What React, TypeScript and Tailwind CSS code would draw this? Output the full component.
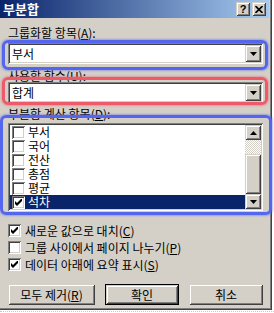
import type { ReactNode } from "react";

const sunken =
  "shadow-[inset_1px_1px_0_#808080,inset_-1px_-1px_0_#ffffff,inset_2px_2px_0_#404040,inset_-2px_-2px_0_#d4d0c8]";
const raised =
  "shadow-[inset_1px_1px_0_#d4d0c8,inset_-1px_-1px_0_#404040,inset_2px_2px_0_#ffffff,inset_-2px_-2px_0_#808080]";

function Arrow({ up = false }: { up?: boolean }) {
  return (
    <svg width="7" height="4" viewBox="0 0 7 4">
      <polygon points={up ? "0,4 7,4 3.5,0" : "0,0 7,0 3.5,4"} fill="#000" />
    </svg>
  );
}

function CheckBox({ checked }: { checked: boolean }) {
  return (
    <span
      className={`flex h-[13px] w-[13px] shrink-0 items-center justify-center bg-white ${sunken}`}
    >
      {checked ? (
        <svg width="7" height="7" viewBox="0 0 7 7">
          <polygon points="0,2 2,4 7,-1 7,2 2,7 0,5" fill="#000" />
        </svg>
      ) : null}
    </span>
  );
}

function Label({ children, className = "" }: { children: ReactNode; className?: string }) {
  return <div className={`h-[12px] text-[12px] leading-[12px] text-black ${className}`}>{children}</div>;
}

function Combo({ value, className = "" }: { value: string; className?: string }) {
  return (
    <div className={`flex h-[21px] items-center bg-white pl-[4px] pr-[2px] ${sunken} ${className}`}>
      <span className="flex-1 text-[12px] leading-[14px]">{value}</span>
      <span className={`flex h-[17px] w-[16px] items-center justify-center bg-[#d4d0c8] ${raised}`}>
        <Arrow />
      </span>
    </div>
  );
}

const fields = ["부서", "국어", "전산", "총점", "평균", "석차"];

export default function App() {
  return (
    <div className="relative h-[313px] w-[274px] overflow-hidden bg-white font-['Noto_Sans_CJK_KR','Noto_Sans_CJK_SC',sans-serif]">
      <div className="flex h-[310px] w-[272px] flex-col bg-[#d4d0c8] shadow-[inset_-1px_-1px_0_#404040,inset_-2px_-2px_0_#808080]">
        {/* title bar */}
        <div className="flex h-[18px] w-[269px] items-center bg-[linear-gradient(90deg,#0a246a_0%,#a6caf0_100%)] pl-[3px] pr-[3px]">
          <span className="flex-1 text-[13px] font-bold leading-[16px] text-white">부분합</span>
          <div className="flex gap-[2px]">
            <span className={`flex h-[14px] w-[14px] items-center justify-center bg-[#d4d0c8] ${raised}`}>
              <span className="font-['Liberation_Sans',sans-serif] text-[11px] font-bold leading-[11px]">?</span>
            </span>
            <span className={`flex h-[14px] w-[14px] items-center justify-center bg-[#d4d0c8] ${raised}`}>
              <svg width="8" height="7" viewBox="0 0 8 7">
                <path d="M0.5 0 L7.5 7 M7.5 0 L0.5 7" stroke="#000" strokeWidth="1.6" />
              </svg>
            </span>
          </div>
        </div>

        <div className="flex w-[271px] flex-col pl-[8px] pr-[8px]">
          <Label className="mt-[9px]">
            그룹화할 항목(<span className="underline">A</span>):
          </Label>
          <Combo value="부서" className="mt-[4px]" />

          <Label className="mt-[6px] h-[10px] leading-[10px]">
            사용할 함수(<span className="underline">U</span>):
          </Label>
          <Combo value="합계" />

          <Label className="mt-[5px]">
            부분합 계산 항목(<span className="underline">D</span>):
          </Label>
          <div className={`mt-[3px] flex h-[88px] bg-white p-[2px] ${sunken}`}>
            <div className="flex flex-1 flex-col">
              {fields.map((f, i) => {
                const selected = i === fields.length - 1;
                return (
                  <div
                    key={f}
                    className={`flex h-[14px] items-center gap-[3px] pl-[2px] text-[12px] leading-[14px] ${
                      selected ? "bg-[#0a246a] text-white" : "text-black"
                    }`}
                  >
                    <CheckBox checked={selected} />
                    <span>{f}</span>
                  </div>
                );
              })}
            </div>
            <div className="flex w-[16px] flex-col">
              <span className={`flex h-[15px] items-center justify-center bg-[#d4d0c8] ${raised}`}>
                <Arrow up />
              </span>
              <span className="h-[14px] bg-[repeating-conic-gradient(#d4d0c8_0_25%,#ffffff_0_50%)] bg-[length:2px_2px]" />
              <span className={`h-[40px] bg-[#d4d0c8] ${raised}`} />
              <span className={`flex h-[15px] items-center justify-center bg-[#d4d0c8] ${raised}`}>
                <Arrow />
              </span>
            </div>
          </div>

          <div className="mt-[11px] flex flex-col text-[12px] leading-[17px]">
            {[
              { c: true, t: "새로운 값으로 대치(", k: "C" },
              { c: false, t: "그룹 사이에서 페이지 나누기(", k: "P" },
              { c: true, t: "데이터 아래에 요약 표시(", k: "S" },
            ].map((r) => (
              <div key={r.k} className="flex h-[17px] items-center gap-[4px]">
                <CheckBox checked={r.c} />
                <span>
                  {r.t}
                  <span className="underline">{r.k}</span>)
                </span>
              </div>
            ))}
          </div>

          <div className="mt-[11px] flex gap-[10px] text-[12px] leading-[14px]">
            <button type="button" className={`flex h-[21px] w-[87px] items-center justify-center bg-[#d4d0c8] ${raised}`}>
              모두 제거(<span className="underline">R</span>)
            </button>
            <button type="button" className="h-[21px] w-[74px] border border-black bg-[#d4d0c8]">
              <span className={`flex h-full w-full items-center justify-center ${raised}`}>확인</span>
            </button>
            <button type="button" className={`flex h-[21px] w-[74px] items-center justify-center bg-[#d4d0c8] ${raised}`}>
              취소
            </button>
          </div>
        </div>
      </div>
      <div className="mt-[1px] w-full border-b border-dotted border-[#c8c8c8]" />

      {/* annotation rings */}
      <div className="pointer-events-none absolute left-[2px] top-[40px] h-[30px] w-[266px] rounded-[6px] border-[3px] border-[#5566ee] shadow-[0_0_2px_1px_rgba(85,102,238,0.45)]" />
      <div className="pointer-events-none absolute left-[2px] top-[77px] h-[28px] w-[266px] rounded-[6px] border-[3px] border-[#ee5a6a] shadow-[0_0_2px_1px_rgba(238,90,106,0.45)]" />
      <div className="pointer-events-none absolute left-[0px] top-[115px] h-[100px] w-[272px] rounded-[6px] border-[3px] border-[#5566ee] shadow-[0_0_2px_1px_rgba(85,102,238,0.45)]" />
    </div>
  );
}
